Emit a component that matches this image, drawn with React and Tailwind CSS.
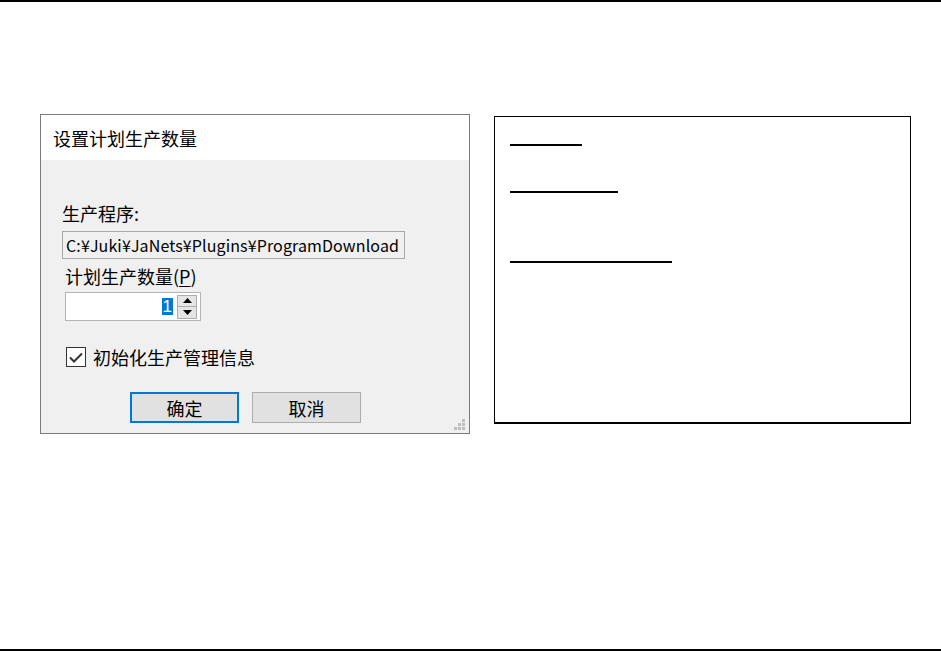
import React from "react";

const cjk = { fontFamily: '"Noto Sans CJK SC", "Noto Sans", sans-serif' };

function SpinArrows() {
  return (
    <div className="flex flex-col w-[20px] h-[24px] border border-[#adadad] bg-[#e5e5e5] mr-[3px]">
      <div className="flex-1 flex items-center justify-center border-b border-[#adadad]">
        <svg width="9" height="5" viewBox="0 0 9 5"><polygon points="0,5 9,5 4.5,0" fill="#000" /></svg>
      </div>
      <div className="flex-1 flex items-center justify-center">
        <svg width="9" height="5" viewBox="0 0 9 5"><polygon points="0,0 9,0 4.5,5" fill="#000" /></svg>
      </div>
    </div>
  );
}

function Grip() {
  const dots = [
    [8, 0],
    [4, 4], [8, 4],
    [0, 8], [4, 8], [8, 8],
  ];
  return (
    <svg width="11" height="11" viewBox="0 0 11 11" className="absolute right-[4px] bottom-[3px]">
      {dots.map(([x, y], i) => (
        <rect key={i} x={x} y={y} width="3" height="3" fill="#bdbdbd" />
      ))}
    </svg>
  );
}

function Dialog() {
  return (
    <div className="relative w-[430px] h-[320px] border border-[#7a7a7a] flex flex-col bg-[#f0f0f0] text-black" style={cjk}>
      <div className="h-[45px] bg-white flex items-center pl-[12px] text-[18px] leading-[20px]">
        设置计划生产数量
      </div>
      <div className="flex-1 flex flex-col pl-[21px]">
        <div className="mt-[43px] text-[18px] leading-[20px]">生产程序:</div>
        <div className="mt-[8px] w-[343px] h-[28px] border border-[#a8a8a8] bg-[#f0f0f0] flex items-center pl-[3px] overflow-hidden whitespace-nowrap">
          <span className="text-[16px] leading-[20px]" style={{ fontFamily: '"Noto Sans CJK JP", "Noto Sans", sans-serif', letterSpacing: "0.12px" }}>
            C:¥Juki¥JaNets¥Plugins¥ProgramDownload
          </span>
        </div>
        <div className="mt-[7px] ml-[3px] text-[18px] leading-[20px]">
          计划生产数量(<span className="underline underline-offset-2">P</span>)
        </div>
        <div className="mt-[6px] ml-[3px] w-[136px] h-[29px] border border-[#b4b4b4] bg-white flex items-center justify-end">
          <span className="bg-[#0078d7] text-white text-[17px] leading-[17px] px-[1px] mr-[4px]" style={{ fontFamily: '"Liberation Sans", sans-serif' }}>1</span>
          <SpinArrows />
        </div>
        <div className="mt-[26px] ml-[4px] flex items-center h-[20px]">
          <div className="w-[20px] h-[20px] border border-[#333] bg-white flex items-center justify-center">
            <svg width="14" height="11" viewBox="0 0 14 11"><polyline points="1,5.5 5,9.5 13,1.5" fill="none" stroke="#333" strokeWidth="2" /></svg>
          </div>
          <span className="ml-[7px] text-[18px] leading-[20px]">初始化生产管理信息</span>
        </div>
        <div className="mt-[25px] flex ml-[68px] gap-[13px]">
          <div className="w-[109px] h-[31px] border-2 border-[#0078d7] bg-[#e1e1e1] flex items-center justify-center text-[18px] leading-[20px]">确定</div>
          <div className="w-[109px] h-[31px] border border-[#adadad] bg-[#e1e1e1] flex items-center justify-center text-[18px] leading-[20px]">取消</div>
        </div>
      </div>
      <Grip />
    </div>
  );
}

function Panel() {
  return (
    <div className="mt-[2px] w-[417px] h-[308px] border border-black border-b-2 bg-white flex flex-col pl-[15px]">
      <div className="mt-[27px] w-[72px] h-[2px] bg-black" />
      <div className="mt-[45px] w-[108px] h-[2px] bg-black" />
      <div className="mt-[68px] w-[162px] h-[2px] bg-black" />
    </div>
  );
}

export default function App() {
  return (
    <div className="w-[941px] h-[651px] bg-white border-t-2 border-b-2 border-black flex flex-col">
      <div className="flex pt-[112px] pl-[40px] gap-[24px]">
        <Dialog />
        <Panel />
      </div>
    </div>
  );
}
